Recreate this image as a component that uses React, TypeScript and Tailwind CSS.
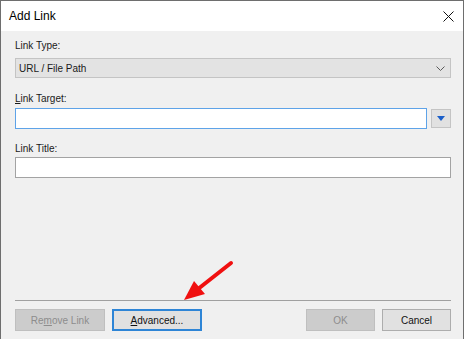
import React from "react";

const font = { fontFamily: '"Liberation Sans", Arial, sans-serif' };

function DialogButton({
  children,
  width,
  variant = "normal",
}: {
  children: React.ReactNode;
  width: string;
  variant?: "normal" | "default" | "disabled";
}) {
  const tone =
    variant === "disabled"
      ? "border-[#bfbfbf] bg-[#cccccc] text-[#8d8d8d]"
      : variant === "default"
        ? "border-[#2e85d6] bg-[#e1e1e1] text-[#111] shadow-[inset_0_0_0_1px_#2e85d6]"
        : "border-[#adadad] bg-[#e1e1e1] text-[#111]";
  return (
    <div className={`flex h-[22px] items-center justify-center border text-[10px] ${width} ${tone}`}>
      {children}
    </div>
  );
}

export default function App() {
  return (
    <div className="relative flex h-[339px] w-[464px] flex-col border-x border-t border-[#6e6e6e] bg-white" style={font}>
      {/* title bar */}
      <div className="flex h-[30px] shrink-0 items-center justify-between bg-white pl-[8px] pr-[9px]">
        <span className="text-[12px] text-black">Add Link</span>
        <svg width="11" height="11" viewBox="0 0 11 11">
          <path d="M0.5 0.5L10.5 10.5M10.5 0.5L0.5 10.5" stroke="#111" strokeWidth="1" />
        </svg>
      </div>

      <div className="flex flex-1 flex-col bg-[#f0f0f0] pb-[8px] pl-[14px] pr-[12px] pt-[9px] text-[#1a1a1a]">
        <div className="h-[12px] text-[10px] leading-[12px]">Link Type:</div>
        <div className="mt-[6px] flex h-[20px] items-center justify-between border border-[#c4c4c4] bg-[#e3e3e3] pl-[3px] pr-[5px] text-[10px]">
          <span>URL / File Path</span>
          <svg width="9" height="5" viewBox="0 0 9 5">
            <path d="M0.5 0.5L4.5 4.5L8.5 0.5" stroke="#5a5a5a" strokeWidth="1" fill="none" />
          </svg>
        </div>

        <div className="mt-[15px] h-[12px] text-[10px] leading-[12px]">
          <u className="decoration-1 underline-offset-1">L</u>ink Target:
        </div>
        <div className="mt-[3px] flex items-center gap-[4px]">
          <div className="h-[21px] flex-1 border border-[#5ea3e8] bg-white" />
          <div className="flex h-[19px] w-[20px] items-center justify-center border border-[#c4c4c4] bg-[#e1e1e1]">
            <svg width="8" height="5" viewBox="0 0 8 5">
              <path d="M0 0H8L4 5Z" fill="#1b5fc9" />
            </svg>
          </div>
        </div>

        <div className="mt-[14px] h-[12px] text-[10px] leading-[12px]">Link Title:</div>
        <div className="mt-[2px] h-[21px] border border-[#a3a3a3] bg-white" />

        <div className="flex-1" />

        <div className="h-px bg-[#a0a0a0]" />
        <div className="mt-[8px] flex items-center justify-between">
          <div className="flex gap-[7px]">
            <DialogButton width="w-[90px]" variant="disabled">
              <span>
                Re<u className="decoration-1">m</u>ove Link
              </span>
            </DialogButton>
            <DialogButton width="w-[90px]" variant="default">
              <span>
                <u className="decoration-1">A</u>dvanced...
              </span>
            </DialogButton>
          </div>
          <div className="flex gap-[7px]">
            <DialogButton width="w-[69px]" variant="disabled">
              OK
            </DialogButton>
            <DialogButton width="w-[69px]">Cancel</DialogButton>
          </div>
        </div>
      </div>

      {/* annotation arrow */}
      <svg className="pointer-events-none absolute left-[-1px] top-[-1px]" width="464" height="339" viewBox="0 0 464 339">
        <line x1="231" y1="263" x2="198" y2="289" stroke="#f01010" strokeWidth="4" strokeLinecap="round" />
        <path d="M184 300L205 294L194 281Z" fill="#f01010" />
      </svg>
    </div>
  );
}
